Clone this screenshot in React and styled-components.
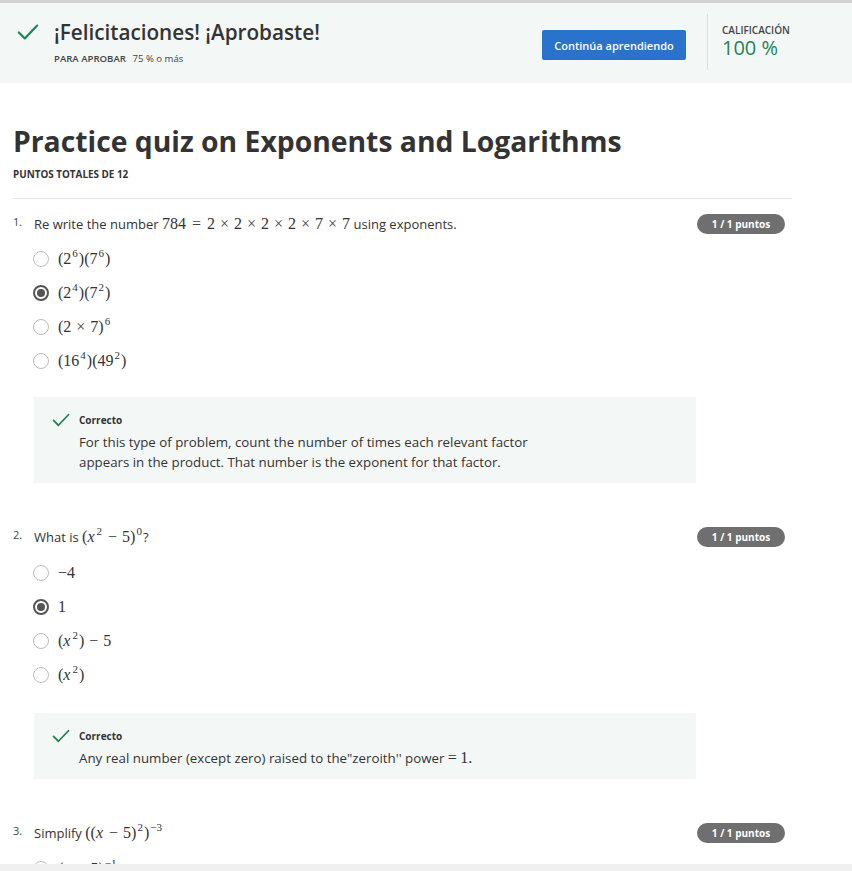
import React from 'react'
import styled, { createGlobalStyle } from 'styled-components'

const GlobalStyle = createGlobalStyle`
  body {
    margin: 0;
    background: #fff;
    font-family: "Open Sans", "Liberation Sans", sans-serif;
    color: #333;
  }
`

const Page = styled.div`
  border-top: 3px solid #d2d2d2;
`

const Banner = styled.header`
  display: flex;
  align-items: center;
  height: 80px;
  background: #f3f8f7;
  padding-left: 17px;
`

const BannerLeft = styled.div`
  flex: 1;
  display: flex;
  flex-direction: column;
  margin-top: -2px;
`

const BannerTitle = styled.div`
  display: flex;
  align-items: center;
  gap: 15px;
  font-size: 20.7px;
  font-weight: 600;
  color: #333;
  line-height: 26px;
`

const PassLine = styled.div`
  margin: 7px 0 0 37px;
  font-size: 9.6px;
  color: #444;
  b {
    font-weight: 600;
    margin-right: 4px;
  }
`

const ContinueButton = styled.button`
  width: 144px;
  height: 30px;
  background: #2a73cc;
  color: #fff;
  border: none;
  border-radius: 2px;
  font-family: inherit;
  font-size: 11px;
  font-weight: 600;
  margin-top: 4px;
`

const Divider = styled.div`
  width: 1px;
  height: 56px;
  background: #dcdcdc;
  margin: -3px 0 0 21px;
`

const Grade = styled.div`
  width: 130px;
  padding-left: 14px;
  margin-top: -6px;
`

const GradeLabel = styled.div`
  font-size: 10px;
  font-weight: 600;
  color: #444;
  line-height: 16px;
`

const GradeValue = styled.div`
  font-size: 20px;
  color: #1f8354;
  line-height: 20px;
`

const Main = styled.main`
  width: 779px;
  padding-left: 13px;
`

const Title = styled.h1`
  margin: 40px 0 0;
  font-size: 28.3px;
  font-weight: 700;
  line-height: 36px;
  color: #333;
`

const Total = styled.div`
  margin-top: 9px;
  font-size: 9.9px;
  font-weight: 700;
  line-height: 12px;
  color: #333;
`

const Rule = styled.hr`
  margin: 18px 0 0;
  border: none;
  border-top: 1px solid #e1e1e1;
`

const QuestionRow = styled.div`
  display: flex;
  align-items: center;
  height: 20px;
  margin-top: ${p => p.$top}px;
  padding-right: 7px;
`

const Num = styled.span`
  width: 21px;
  font-size: 11px;
  color: #444;
  align-self: flex-start;
  line-height: 15px;
`

const Prompt = styled.span`
  flex: 1;
  font-size: 13px;
  line-height: 20px;
  color: #333;
`

const Badge = styled.span`
  width: 88px;
  height: 20px;
  border-radius: 10px;
  background: #6f6f6f;
  color: #fff;
  font-size: 10px;
  font-weight: 700;
  display: flex;
  align-items: center;
  justify-content: center;
`

const Options = styled.div`
  margin-top: ${p => p.$top}px;
  padding-left: 20px;
`

const Option = styled.div`
  display: flex;
  align-items: center;
  height: 34px;
  gap: 9px;
`

const Radio = styled.span`
  box-sizing: border-box;
  width: 16px;
  height: 16px;
  border-radius: 50%;
  border: ${p => (p.$checked ? '2px solid #555' : '1.5px solid #bdbdbd')};
  display: flex;
  align-items: center;
  justify-content: center;
  &::after {
    content: '';
    display: ${p => (p.$checked ? 'block' : 'none')};
    width: 8px;
    height: 8px;
    border-radius: 50%;
    background: #555;
  }
`

const Math = styled.span`
  font-family: "Liberation Serif", "DejaVu Serif", serif;
  font-size: 16px;
  line-height: 18px;
  color: #333;
  white-space: nowrap;
`

const V = styled.i`
  font-style: italic;
  margin-right: 1px;
`

const Sup = styled.sup`
  font-size: 11px;
  vertical-align: 7px;
  line-height: 0;
  margin: 0 1px 0 1px;
`

const Op = styled.span`
  margin: 0 ${p => p.$gap ?? 5}px;
  color: #444;
`

const Feedback = styled.div`
  display: grid;
  grid-template-columns: 18px 1fr;
  column-gap: 9px;
  width: 662px;
  box-sizing: border-box;
  margin: ${p => p.$top}px 0 0 21px;
  padding: 14px 18px 11px;
  background: #f3f8f7;
`

const Check = styled.svg`
  width: ${p => p.$size}px;
  height: ${p => p.$size}px;
`

const FeedbackLabel = styled.div`
  font-size: 10px;
  font-weight: 700;
  line-height: 14px;
  color: #333;
  align-self: center;
`

const FeedbackText = styled.div`
  grid-column: 2;
  margin-top: 3px;
  font-size: 13.3px;
  line-height: 20px;
  color: #333;
`

const ScrollBar = styled.div`
  position: fixed;
  left: 0;
  right: 0;
  bottom: 0;
  height: 7px;
  background: #f0f0f0;
`

const CheckIcon = ({ size }) => (
  <Check $size={size} viewBox="0 0 24 24" fill="none">
    <path d="M2 12.5l6.5 6.5L22 5" stroke="#1f8354" strokeWidth="2.4" strokeLinecap="round" strokeLinejoin="round" />
  </Check>
)

const questions = [
  {
    n: '1.',
    top: 15,
    optTop: 8,
    fbTop: 19,
    prompt: (
      <>
        Re write the number{' '}
        <Math>
          784<Op $gap={6}>=</Op>2<Op>×</Op>2<Op>×</Op>2<Op>×</Op>2<Op>×</Op>7<Op>×</Op>7
        </Math>{' '}
        using exponents.
      </>
    ),
    options: [
      <>(2<Sup>6</Sup>)(7<Sup>6</Sup>)</>,
      <>(2<Sup>4</Sup>)(7<Sup>2</Sup>)</>,
      <>(2<Op>×</Op>7)<Sup>6</Sup></>,
      <>(16<Sup>4</Sup>)(49<Sup>2</Sup>)</>
    ],
    checked: 1,
    feedback: (
      <>
        For this type of problem, count the number of times each relevant factor
        <br />
        appears in the product. That number is the exponent for that factor.
      </>
    )
  },
  {
    n: '2.',
    top: 44,
    optTop: 9,
    fbTop: 21,
    prompt: (
      <>
        What is{' '}
        <Math>
          (<V>x</V><Sup>2</Sup><Op>−</Op>5)<Sup>0</Sup>
        </Math>
        ?
      </>
    ),
    options: [
      <>−4</>,
      <>1</>,
      <>(<V>x</V><Sup>2</Sup>)<Op>−</Op>5</>,
      <>(<V>x</V><Sup>2</Sup>)</>
    ],
    checked: 1,
    feedback: (
      <>
        Any real number (except zero) raised to the"zeroith'' power <Math>=</Math> <Math>1.</Math>
      </>
    )
  },
  {
    n: '3.',
    top: 44,
    optTop: 9,
    prompt: (
      <>
        Simplify{' '}
        <Math>
          ((<V>x</V><Op>−</Op>5)<Sup>2</Sup>)<Sup>−3</Sup>
        </Math>
      </>
    ),
    options: [<>(<V>x</V><Op>−</Op>5)<Sup>−1</Sup></>],
    checked: -1
  }
]

const App = () => {
  return (
    <Page>
      <GlobalStyle />
      <Banner>
        <BannerLeft>
          <BannerTitle>
            <CheckIcon size={22} />
            ¡Felicitaciones! ¡Aprobaste!
          </BannerTitle>
          <PassLine>
            <b>PARA APROBAR</b> 75 % o más
          </PassLine>
        </BannerLeft>
        <ContinueButton>Continúa aprendiendo</ContinueButton>
        <Divider />
        <Grade>
          <GradeLabel>CALIFICACIÓN</GradeLabel>
          <GradeValue>100 %</GradeValue>
        </Grade>
      </Banner>
      <Main>
        <Title>Practice quiz on Exponents and Logarithms</Title>
        <Total>PUNTOS TOTALES DE 12</Total>
        <Rule />
        {questions.map((q, index) => (
          <section key={index}>
            <QuestionRow $top={q.top}>
              <Num>{q.n}</Num>
              <Prompt>{q.prompt}</Prompt>
              <Badge>1 / 1 puntos</Badge>
            </QuestionRow>
            <Options $top={q.optTop}>
              {q.options.map((opt, i) => (
                <Option key={i}>
                  <Radio $checked={i === q.checked} />
                  <Math>{opt}</Math>
                </Option>
              ))}
            </Options>
            {q.feedback && (
              <Feedback $top={q.fbTop}>
                <CheckIcon size={18} />
                <FeedbackLabel>Correcto</FeedbackLabel>
                <FeedbackText>{q.feedback}</FeedbackText>
              </Feedback>
            )}
          </section>
        ))}
      </Main>
      <ScrollBar />
    </Page>
  )
}

export default App
